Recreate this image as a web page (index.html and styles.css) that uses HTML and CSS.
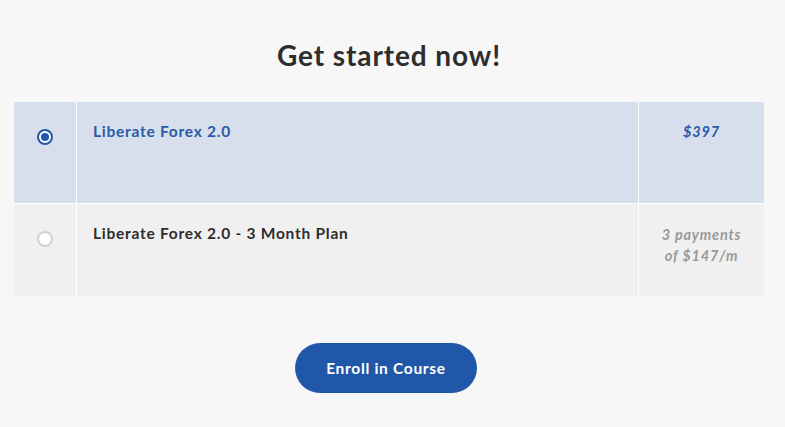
FILE: index.html
```html
<!DOCTYPE html>
<html lang="en">
<head>
    <meta charset="UTF-8">
    <meta name="viewport" content="width=device-width, initial-scale=1.0">
    <title>Get started now!</title>
    <link rel="stylesheet" href="styles.css">
</head>
<body>
    <div class="checkout">
        <h1>Get started now!</h1>

        <div class="plans">
            <label class="plan selected">
                <div class="plan-radio"><span class="radio checked"></span></div>
                <div class="plan-name">Liberate Forex 2.0</div>
                <div class="plan-price">$397</div>
            </label>
            <label class="plan">
                <div class="plan-radio"><span class="radio"></span></div>
                <div class="plan-name">Liberate Forex 2.0 - 3 Month Plan</div>
                <div class="plan-price">3 payments<br>of $147/m</div>
            </label>
        </div>

        <div class="actions">
            <button class="enroll-btn">Enroll in Course</button>
        </div>
    </div>
</body>
</html>
```

FILE: styles.css
```css
body {
    margin: 0;
    background: #f7f7f7;
    font-family: Lato, "Open Sans", Arial, sans-serif;
    color: #333;
}

.checkout {
    padding: 38px 21px 0 14px;
}

h1 {
    margin: 0 0 30px;
    text-align: center;
    font-size: 28px;
    font-weight: 700;
    color: #2d2d2d;
    line-height: 34px;
    letter-spacing: 0.9px;
}

.plans {
    display: flex;
    flex-direction: column;
    gap: 1px;
    background: #fff;
}

.plan {
    display: grid;
    grid-template-columns: 62px 1fr 125px;
    column-gap: 1px;
    background: #fff;
    cursor: pointer;
}

.plan > div {
    background: #f0f0f0;
}

.plan.selected > div {
    background: #d8dfec;
}

.plan.selected {
    min-height: 101px;
}

.plan:not(.selected) {
    min-height: 92px;
}

.plan-radio {
    display: flex;
    justify-content: center;
    padding-top: 27px;
}

.radio {
    width: 12px;
    height: 12px;
    border: 2px solid #d2d2d2;
    border-radius: 50%;
    background: #fff;
    position: relative;
    box-sizing: content-box;
}

.radio.checked {
    border-color: #2157a8;
}

.radio.checked::after {
    content: "";
    position: absolute;
    top: 2px;
    left: 2px;
    width: 8px;
    height: 8px;
    border-radius: 50%;
    background: #2157a8;
}

.plan-name {
    padding: 19px 16px;
    font-size: 15.5px;
    font-weight: 700;
    line-height: 20px;
    letter-spacing: 0.75px;
    color: #2d2d2d;
}

.plan.selected .plan-name {
    color: #2a5aa8;
}

.plan-price {
    padding: 20px 8px;
    text-align: center;
    font-size: 14.5px;
    font-weight: 700;
    font-style: italic;
    line-height: 21px;
    letter-spacing: 0.8px;
    color: #999;
}

.plan.selected .plan-price {
    color: #2a5aa8;
}

.plan.selected .plan-price {
    padding-top: 19px;
}

.actions {
    display: flex;
    justify-content: center;
    padding-top: 47px;
}

.enroll-btn {
    width: 182px;
    height: 50px;
    margin-left: -6px;
    padding-bottom: 2px;
    border: none;
    border-radius: 25px;
    background: #2157a8;
    color: #fff;
    font-family: inherit;
    font-size: 15.5px;
    font-weight: 700;
    letter-spacing: 0.7px;
    cursor: pointer;
}
```
